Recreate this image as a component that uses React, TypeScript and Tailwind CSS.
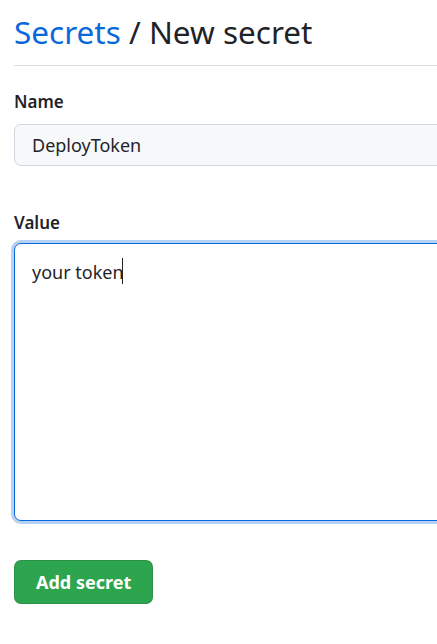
import { useState } from 'react';

const App = () => {
  const [name, setName] = useState('DeployToken');
  const [value, setValue] = useState('your token');

  return (
    <div
      className="min-h-screen bg-white pl-[14px] overflow-hidden"
      style={{ fontFamily: '"Segoe UI", "Noto Sans", sans-serif' }}
    >
      {/* Header */}
      <div className="pt-[10px] pb-[11px] border-b border-[#d8dee4] w-[500px]">
        <h2 className="text-[31.5px] leading-[44px] font-normal text-[#1f2328] whitespace-nowrap">
          <a href="#" className="text-[#0969da]">Secrets</a> / New secret
        </h2>
      </div>

      <form className="w-[520px]" onSubmit={(e) => e.preventDefault()}>
        {/* Name */}
        <div className="mt-[24px]">
          <label className="block text-[17px] leading-[24px] font-semibold text-[#1f2328] mb-[10px]">
            Name
          </label>
          <input
            value={name}
            onChange={(e) => setName(e.target.value)}
            className="block w-full h-[42px] px-[17px] text-[18px] text-[#1f2328] bg-[#f6f8fa] border border-[#d0d7de] rounded-[7px] outline-none"
          />
        </div>

        {/* Value */}
        <div className="mt-[45px]">
          <label className="block text-[17px] leading-[24px] font-semibold text-[#1f2328] mb-[8px]">
            Value
          </label>
          <div className="relative">
            <textarea
              value={value}
              onChange={(e) => setValue(e.target.value)}
              className="block w-full h-[278px] px-[17px] py-[15px] text-[18px] leading-[27px] text-[#1f2328] bg-white border border-[#0969da] rounded-[7px] outline-none resize-none shadow-[0_0_0_3px_rgba(9,105,218,0.3)]"
            />
            {/* text caret */}
            <span className="absolute left-[108px] top-[15px] w-px h-[26px] bg-[#1f2328]" />
          </div>
        </div>

        {/* Submit */}
        <button
          type="submit"
          className="mt-[39px] h-[44px] px-[21px] rounded-[7px] bg-[#2da44e] border border-[rgba(31,35,40,0.15)] text-white text-[18px] font-bold"
        >
          Add secret
        </button>
      </form>
    </div>
  );
};

export default App;
